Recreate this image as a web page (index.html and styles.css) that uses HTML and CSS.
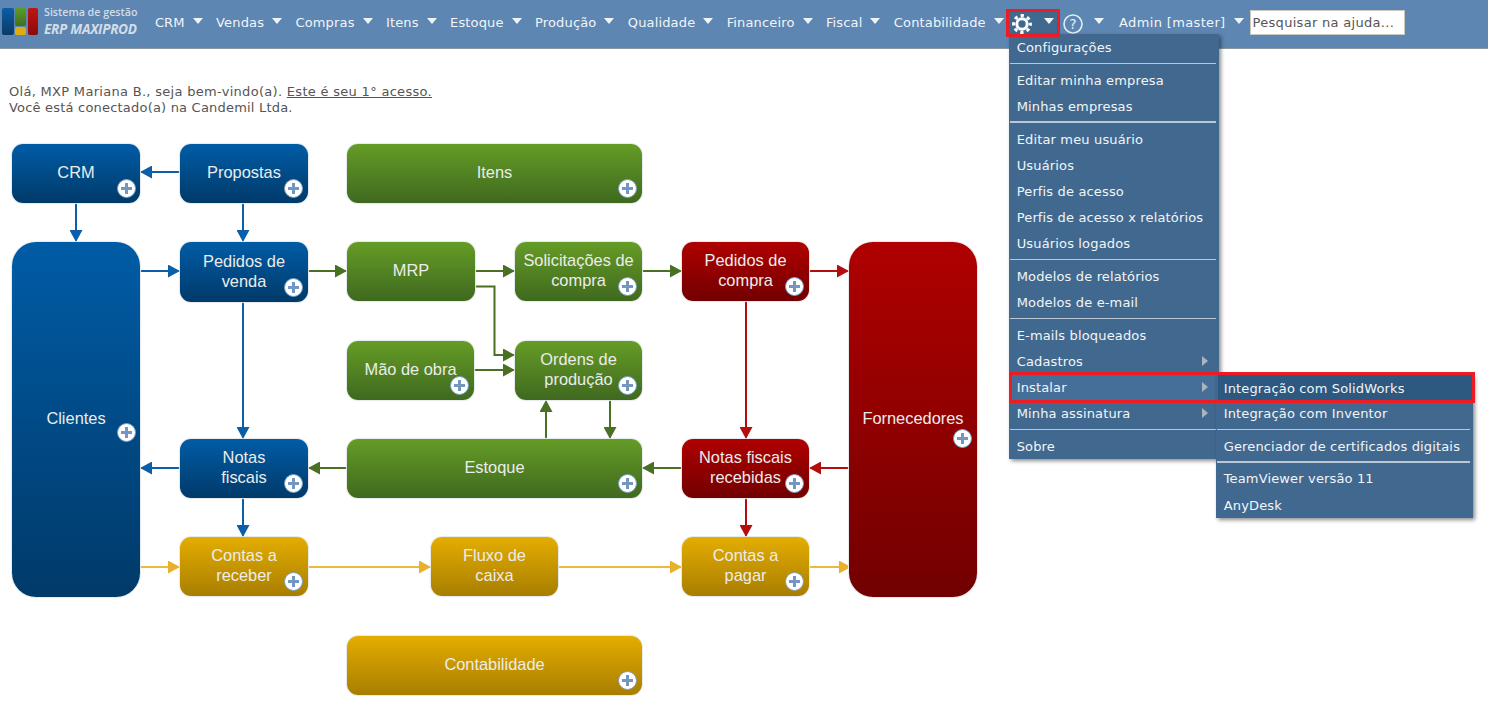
FILE: index.html
```html
<!DOCTYPE html>
<html lang="pt-BR">
<head>
    <meta charset="UTF-8">
    <title>ERP MAXIPROD</title>
    <link rel="stylesheet" href="styles.css">
</head>
<body>
    <header class="topbar">
        <a class="logo">
            <svg class="logo-mark" width="40" height="30" viewBox="0 0 40 30">
                <defs>
                    <linearGradient id="lgBlue" x1="0" y1="0" x2="0" y2="1"><stop offset="0" stop-color="#0b5ea6"/><stop offset="1" stop-color="#0a3a66"/></linearGradient>
                    <linearGradient id="lgGreen" x1="0" y1="0" x2="0" y2="1"><stop offset="0" stop-color="#5f9c2a"/><stop offset="1" stop-color="#3f6f1e"/></linearGradient>
                    <linearGradient id="lgRed" x1="0" y1="0" x2="0" y2="1"><stop offset="0" stop-color="#c01515"/><stop offset="1" stop-color="#8a0a0a"/></linearGradient>
                </defs>
                <rect x="2" y="2" width="12" height="27" rx="2" fill="url(#lgBlue)"/>
                <rect x="15" y="2" width="11" height="18" rx="2" fill="url(#lgGreen)"/>
                <rect x="15" y="21" width="11" height="8" rx="2" fill="#e0ab10"/>
                <rect x="28" y="2" width="10" height="27" rx="2" fill="url(#lgRed)"/>
            </svg>
            <span class="logo-text">
                <span class="logo-top">Sistema de gestão</span>
                <span class="logo-name">ERP MAXIPROD</span>
            </span>
        </a>
        <nav class="nav">
            <div class="nav-item">CRM<i class="caret"></i></div>
            <div class="nav-item">Vendas<i class="caret"></i></div>
            <div class="nav-item">Compras<i class="caret"></i></div>
            <div class="nav-item">Itens<i class="caret"></i></div>
            <div class="nav-item">Estoque<i class="caret"></i></div>
            <div class="nav-item">Produção<i class="caret"></i></div>
            <div class="nav-item">Qualidade<i class="caret"></i></div>
            <div class="nav-item">Financeiro<i class="caret"></i></div>
            <div class="nav-item">Fiscal<i class="caret"></i></div>
            <div class="nav-item">Contabilidade<i class="caret"></i></div>
            <div class="nav-item nav-gear">
                <svg class="icon" width="20" height="20" viewBox="0 0 20 20">
                    <circle cx="10" cy="10" r="8.4" fill="none" stroke="#fff" stroke-width="3" stroke-dasharray="3.3 3.3" stroke-dashoffset="1.65"/>
                    <circle cx="10" cy="10" r="5.2" fill="none" stroke="#fff" stroke-width="3"/>
                </svg>
                <i class="caret caret-gear"></i>
                <ul class="menu">
                    <li>Configurações</li>
                    <li class="sep"></li>
                    <li>Editar minha empresa</li>
                    <li>Minhas empresas</li>
                    <li class="sep thick"></li>
                    <li>Editar meu usuário</li>
                    <li>Usuários</li>
                    <li>Perfis de acesso</li>
                    <li>Perfis de acesso x relatórios</li>
                    <li>Usuários logados</li>
                    <li class="sep"></li>
                    <li>Modelos de relatórios</li>
                    <li>Modelos de e-mail</li>
                    <li class="sep"></li>
                    <li>E-mails bloqueados</li>
                    <li class="has-sub">Cadastros</li>
                    <li class="has-sub active">Instalar
                        <ul class="menu submenu">
                            <li class="selected">Integração com SolidWorks</li>
                            <li>Integração com Inventor</li>
                            <li class="sep"></li>
                            <li>Gerenciador de certificados digitais</li>
                            <li class="sep thick"></li>
                            <li>TeamViewer versão 11</li>
                            <li class="last">AnyDesk</li>
                        </ul>
                        <span class="red-box"></span>
                    </li>
                    <li class="has-sub">Minha assinatura</li>
                    <li class="sep"></li>
                    <li>Sobre</li>
                </ul>
            </div>
            <div class="nav-item nav-help">
                <svg class="icon" width="20" height="20" viewBox="0 0 20 20">
                    <circle cx="10" cy="10" r="9" fill="none" stroke="#e4eaf1" stroke-width="1.6"/>
                    <text x="10" y="15" text-anchor="middle" class="help-mark">?</text>
                </svg>
                <i class="caret caret-help"></i>
            </div>
            <div class="nav-item nav-admin">Admin [master]<i class="caret"></i></div>
            <input class="search" type="text" placeholder="Pesquisar na ajuda...">
        </nav>
    </header>

    <main>
        <p class="welcome">Olá, MXP Mariana B., seja bem-vindo(a). <a href="#">Este é seu 1° acesso.</a><br><span class="welcome-sub">Você está conectado(a) na Candemil Ltda.</span></p>

        <div class="diagram">
            <svg class="arrows" width="1000" height="570" viewBox="0 130 1000 570">
                <defs>
                    <marker id="hBlue" markerUnits="userSpaceOnUse" markerWidth="12" markerHeight="13" refX="12" refY="6.5" orient="auto"><polygon points="0,0 12,6.5 0,13" fill="#0b5fa8"/></marker>
                    <marker id="hGreen" markerUnits="userSpaceOnUse" markerWidth="12" markerHeight="13" refX="12" refY="6.5" orient="auto"><polygon points="0,0 12,6.5 0,13" fill="#4a7023"/></marker>
                    <marker id="hRed" markerUnits="userSpaceOnUse" markerWidth="12" markerHeight="13" refX="12" refY="6.5" orient="auto"><polygon points="0,0 12,6.5 0,13" fill="#b50d0d"/></marker>
                    <marker id="hYellow" markerUnits="userSpaceOnUse" markerWidth="12" markerHeight="13" refX="12" refY="6.5" orient="auto"><polygon points="0,0 12,6.5 0,13" fill="#e8b02c"/></marker>
                </defs>
                <g class="line-blue">
                    <path d="M180 172H140" marker-end="url(#hBlue)"/>
                    <path d="M76 203V242" marker-end="url(#hBlue)"/>
                    <path d="M243 203V242" marker-end="url(#hBlue)"/>
                    <path d="M140 271H180" marker-end="url(#hBlue)"/>
                    <path d="M243 302V439" marker-end="url(#hBlue)"/>
                    <path d="M180 468H140" marker-end="url(#hBlue)"/>
                    <path d="M243 498V537" marker-end="url(#hBlue)"/>
                </g>
                <g class="line-green">
                    <path d="M308 271H347" marker-end="url(#hGreen)"/>
                    <path d="M475 271H515" marker-end="url(#hGreen)"/>
                    <path d="M642 271H682" marker-end="url(#hGreen)"/>
                    <path d="M475 286.5H494.5V355H515" marker-end="url(#hGreen)"/>
                    <path d="M474 370H515" marker-end="url(#hGreen)"/>
                    <path d="M546 439V400" marker-end="url(#hGreen)"/>
                    <path d="M610 400V439" marker-end="url(#hGreen)"/>
                    <path d="M682 468H642" marker-end="url(#hGreen)"/>
                    <path d="M347 468H308" marker-end="url(#hGreen)"/>
                </g>
                <g class="line-red">
                    <path d="M809 271H849" marker-end="url(#hRed)"/>
                    <path d="M746 301V439" marker-end="url(#hRed)"/>
                    <path d="M849 468H809" marker-end="url(#hRed)"/>
                    <path d="M746 498V537" marker-end="url(#hRed)"/>
                </g>
                <g class="line-yellow">
                    <path d="M140 567H180" marker-end="url(#hYellow)"/>
                    <path d="M308 567H431" marker-end="url(#hYellow)"/>
                    <path d="M558 567H682" marker-end="url(#hYellow)"/>
                    <path d="M809 567H851" marker-end="url(#hYellow)"/>
                </g>
            </svg>

            <div class="node blue n-crm">CRM<span class="plus"></span></div>
            <div class="node blue n-propostas">Propostas<span class="plus"></span></div>
            <div class="node green wide n-itens">Itens<span class="plus"></span></div>
            <div class="node blue tall n-clientes">Clientes<span class="plus plus-clientes"></span></div>
            <div class="node blue n-pedvenda">Pedidos de<br>venda<span class="plus"></span></div>
            <div class="node green n-mrp">MRP</div>
            <div class="node green narrow n-solic">Solicitações de<br>compra<span class="plus"></span></div>
            <div class="node red narrow n-pedcompra">Pedidos de<br>compra<span class="plus"></span></div>
            <div class="node red tall n-fornec">Fornecedores<span class="plus plus-fornec"></span></div>
            <div class="node green narrow n-mao">Mão de obra<span class="plus"></span></div>
            <div class="node green narrow n-ordens">Ordens de<br>produção<span class="plus"></span></div>
            <div class="node blue n-notas">Notas<br>fiscais<span class="plus"></span></div>
            <div class="node green wide n-estoque">Estoque<span class="plus"></span></div>
            <div class="node red narrow n-nfrec">Notas fiscais<br>recebidas<span class="plus"></span></div>
            <div class="node yellow n-receber">Contas a<br>receber<span class="plus"></span></div>
            <div class="node yellow narrow n-fluxo">Fluxo de<br>caixa</div>
            <div class="node yellow narrow n-pagar">Contas a<br>pagar<span class="plus"></span></div>
            <div class="node yellow wide n-contab">Contabilidade<span class="plus"></span></div>
        </div>
    </main>
</body>
</html>
```

FILE: styles.css
```css
html, body {
    margin: 0;
    padding: 0;
    background: #fff;
    overflow: hidden;
}
body {
    font-family: "DejaVu Sans", Verdana, sans-serif;
    font-size: 13px;
    color: #555;
}
ul {
    list-style: none;
    margin: 0;
    padding: 0;
}

/* top bar */
.topbar {
    display: flex;
    height: 48px;
    background: #5d86b2;
    border-bottom: 1px solid #8f979f;
    color: #f2f5f8;
}
.logo {
    display: flex;
    width: 146.5px;
    flex: none;
    padding-top: 6px;
    box-sizing: border-box;
}
.logo-mark {
    flex: none;
    margin-right: 4px;
}
.logo-text {
    display: flex;
    flex-direction: column;
    font-family: "Open Sans", sans-serif;
    color: #d3dce7;
    white-space: nowrap;
}
.logo-top {
    font-size: 10.7px;
    font-weight: 600;
    line-height: 13px;
}
.logo-name {
    font-size: 13.6px;
    font-weight: 700;
    font-style: italic;
    line-height: 20px;
    letter-spacing: -0.3px;
}
.nav {
    display: flex;
    align-items: flex-start;
    padding-top: 12px;
}
.nav-item {
    position: relative;
    display: flex;
    align-items: center;
    height: 22px;
    box-sizing: border-box;
    padding: 0 5px 2px 8.4px;
    letter-spacing: 0.15px;
    white-space: nowrap;
}
.caret {
    width: 0;
    height: 0;
    margin: 0 0 3px 8px;
    border-left: 5.5px solid transparent;
    border-right: 5.5px solid transparent;
    border-top: 6px solid #f2f5f8;
}
.nav-gear {
    padding: 0 3px 2px;
    background: #41698f;
}
.nav-gear::after {
    content: "";
    position: absolute;
    top: -3px;
    left: -3px;
    right: -3px;
    bottom: -3px;
    border: 3px solid #ed1c24;
    z-index: 12;
    pointer-events: none;
}
.caret-gear {
    margin-left: 12px;
}
.nav-help {
    padding: 0 5px 2px 6px;
}
.caret-help {
    margin-left: 11px;
}
.nav-admin {
    padding-left: 10.4px;
    letter-spacing: 0.35px;
}
.icon {
    flex: none;
    margin-top: 4px;
}
.help-mark {
    font-family: "DejaVu Sans", sans-serif;
    font-size: 14px;
    fill: #e4eaf1;
}
.search {
    width: 155px;
    height: 25px;
    margin: -2px 0 0 1px;
    padding: 0 2px;
    box-sizing: border-box;
    border: 1px solid #c9c9c0;
    background: #fff;
    font-family: "DejaVu Sans", Verdana, sans-serif;
    font-size: 13px;
    letter-spacing: 0.3px;
    color: #555;
}
.search::placeholder {
    color: #555;
    opacity: 1;
}

/* dropdown */
.menu {
    position: absolute;
    top: 100%;
    left: 0;
    width: 210px;
    z-index: 10;
    background: #41698f;
    color: #f2f5f8;
    box-shadow: 2px 2px 4px rgba(0, 0, 0, 0.45);
}
.menu li {
    position: relative;
    height: 26px;
    padding-left: 8px;
    line-height: 28px;
    letter-spacing: 0.15px;
    white-space: nowrap;
}
.menu li.sep {
    height: 1px;
    margin: 3px 3px 3px 1px;
    padding: 0;
    background: #b9c7d6;
}
.menu li.sep.thick {
    height: 2px;
    margin: 2px 3px 3px 1px;
}
.has-sub::after {
    content: "";
    position: absolute;
    right: 11px;
    top: 8px;
    border-top: 5px solid transparent;
    border-bottom: 5px solid transparent;
    border-left: 6px solid #a9b4bf;
}
.menu li.active {
    z-index: 5;
    background: #456f98;
}
.submenu {
    top: 1px;
    left: 207px;
    width: 257px;
    height: 143px;
}
.submenu li.selected {
    height: 25px;
    margin: 0 1px 0 2px;
    padding-left: 6px;
    line-height: 27px;
    background: #2d5880;
}
.menu .submenu li.sep.thick {
    margin-bottom: 2px;
}
.submenu li.last {
    margin-top: 1px;
}
.red-box {
    position: absolute;
    top: -2px;
    left: 0;
    width: 460px;
    height: 25px;
    border: 3px solid #ed1c24;
    z-index: 11;
    pointer-events: none;
}

/* welcome text */
.welcome {
    margin: 0;
    padding: 35px 0 0 9px;
    line-height: 16px;
    letter-spacing: 0.3px;
}
.welcome a {
    color: #555;
}
.welcome-sub {
    letter-spacing: 0.2px;
}

/* flow diagram */
.diagram {
    position: relative;
    height: 570px;
    margin-top: 14px;
}
.arrows {
    position: absolute;
    top: 0;
    left: 0;
}
.arrows g path {
    fill: none;
    stroke-width: 2;
}
.line-blue path { stroke: #0b5fa8; }
.line-green path { stroke: #4a7023; }
.line-red path { stroke: #b50d0d; }
.line-yellow path { stroke: #ecb83f; }

.node {
    position: absolute;
    display: flex;
    align-items: center;
    justify-content: center;
    width: 128px;
    height: 59px;
    box-sizing: border-box;
    padding-bottom: 3px;
    border-radius: 11px;
    box-shadow: 0 0 1px 1px #e6e9ec;
    font-family: "Liberation Sans", Arial, sans-serif;
    font-size: 16.4px;
    line-height: 20px;
    text-align: center;
    color: #ececec;
    flex-wrap: wrap;
    align-content: center;
}
.node.narrow {
    width: 127px;
}
.node.wide {
    width: 295px;
}
.node.tall {
    height: 355px;
    border-radius: 24px;
}
.blue { background: linear-gradient(#005ca6, #003a69); }
.green { background: linear-gradient(#659c26, #3f691f); }
.red { background: linear-gradient(#b00000, #720000); }
.yellow { background: linear-gradient(#e4ad00, #a87e00); }

.plus {
    position: absolute;
    right: 5px;
    bottom: 5px;
    width: 19px;
    height: 19px;
    box-sizing: border-box;
    border: 1px solid #7d9fc4;
    border-radius: 50%;
    background:
        linear-gradient(#7397c0, #7397c0) center / 11px 3px no-repeat,
        linear-gradient(#7397c0, #7397c0) center / 3px 11px no-repeat,
        #fff;
}
.n-crm .plus, .plus-clientes { right: 4px; }
.plus-clientes { bottom: 155px; }
.plus-fornec { bottom: 149px; }

.n-crm { left: 12px; top: 14px; }
.n-propostas { left: 180px; top: 14px; }
.n-itens { left: 347px; top: 14px; }
.n-clientes { left: 12px; top: 112px; }
.n-pedvenda { left: 180px; top: 112px; height: 60px; }
.n-mrp { left: 347px; top: 112px; }
.n-solic { left: 515px; top: 112px; }
.n-pedcompra { left: 682px; top: 112px; }
.n-fornec { left: 849px; top: 112px; }
.n-mao { left: 347px; top: 211px; }
.n-ordens { left: 515px; top: 211px; }
.n-notas { left: 180px; top: 309px; }
.n-estoque { left: 347px; top: 309px; }
.n-nfrec { left: 682px; top: 309px; }
.n-receber { left: 180px; top: 407px; }
.n-fluxo { left: 431px; top: 407px; }
.n-pagar { left: 682px; top: 407px; }
.n-contab { left: 347px; top: 506px; }
```
